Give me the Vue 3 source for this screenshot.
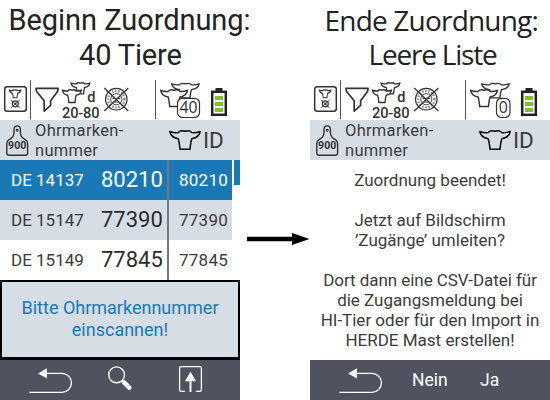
<script setup>
const rows = [
  { tag: 'DE 14137', big: '80210', id: '80210', active: true },
  { tag: 'DE 15147', big: '77390', id: '77390', shaded: true },
  { tag: 'DE 15149', big: '77845', id: '77845' },
]
const panels = [
  { key: 'start', count: '40', badgeX: 177.5, badgeW: 22 },
  { key: 'end', count: '0', badgeX: 186.5, badgeW: 13.5 },
]
const cow = 'M0.8 1.2C4 2.4 7 2.6 9.3 2.3C10.8 0.4 13.5 0.3 16 1.1C18.5 0.3 21.2 0.4 22.7 2.3C25 2.6 28 2.4 31.2 1.2C30.6 5.6 27.2 7.6 22.8 8.3C21.6 11.6 21.4 15 21 18.6H11C10.6 15 10.4 11.6 9.2 8.3C4.8 7.6 1.4 5.6 0.8 1.2Z'
</script>

<template>
  <main class="page">
    <section v-for="p in panels" :key="p.key" class="column" :class="p.key">
      <h1 v-if="p.key === 'start'" class="title"><span class="t1">Beginn Zuordnung:</span><span class="t2">40 Tiere</span></h1>
      <h1 v-else class="title alt"><span class="t3">Ende Zuordnung:</span><span class="t4">Leere Liste</span></h1>

      <div class="device">
        <div class="status">
          <svg width="30" height="40" viewBox="0 0 30 40" class="ink">
            <rect x="4.7" y="6.7" width="21.6" height="24.6" rx="2.5" stroke-width="1.5" />
            <g transform="translate(9 9.6) scale(.38 .44)"><path :d="cow" stroke-width="2.6" /></g>
            <circle cx="15.3" cy="23.8" r="3" stroke-width="1.2" />
            <circle cx="15.3" cy="23.8" r=".8" />
            <path d="M11 20l8.6 7.8M19.6 20L11 27.8" stroke-width=".9" />
          </svg>
          <i class="rule"></i>
          <svg width="29" height="40" viewBox="31 0 29 40" class="ink">
            <path d="M36 8.4H58.1Q58 11 57 12.3L50.6 20.8V25.4L44.2 31.2V20.8L37.2 12.3Q36 11 36 8.4Z" stroke-width="1.7" stroke-linejoin="round" />
          </svg>
          <svg width="42" height="40" viewBox="60 0 42 40" class="ink">
            <g transform="translate(70.5 2.4) scale(.62 .62)"><path :d="cow" stroke-width="2.1" /></g>
            <g transform="translate(62 9.4) scale(.62 .7)"><path :d="cow" stroke-width="2.1" fill="#fff" /></g>
            <text x="87.2" y="22.2" font-size="14.5" font-weight="500">d</text>
            <text x="62" y="37.6" font-size="14.6" font-weight="500" textLength="37.5">20-80</text>
          </svg>
          <svg width="29" height="40" viewBox="102 0 29 40" class="ink">
            <circle cx="116.3" cy="19.2" r="10.8" stroke-width="1.1" />
            <circle cx="116.3" cy="19.2" r="8.2" stroke-width="2.4" stroke-dasharray="1.5 1.6" opacity=".6" />
            <circle cx="116.3" cy="19.2" r="5.6" stroke-width=".9" />
            <path d="M112.5 18.5h2.5M117.7 18.5h2.5M114 22h4.6" stroke-width="1" />
            <path d="M104.3 8L128.3 31M128.3 8L104.3 31" stroke-width="1.3" />
          </svg>
          <i class="rule second"></i>
          <svg width="49" height="40" viewBox="156 0 49 40" class="ink">
            <g transform="translate(171 3) scale(.9 .8)"><path :d="cow" stroke-width="1.6" fill="#fbfbf8" /></g>
            <g transform="translate(160 9.3) scale(.88 .92)"><path :d="cow" stroke-width="1.6" fill="#fbfbf8" /></g>
            <rect :x="p.badgeX" y="18.3" :width="p.badgeW" height="19.2" rx="5" stroke-width="1.2" fill="#fff" />
            <text :x="p.badgeX + p.badgeW / 2" y="33.4" font-size="15.8" text-anchor="middle" class="count">{{ p.count }}</text>
          </svg>
          <svg width="35" height="40" viewBox="205 0 35 40">
            <rect x="215.5" y="8" width="7" height="3" fill="#222" />
            <rect x="212.2" y="11.8" width="13.6" height="23" fill="#fff" stroke="#222" stroke-width="2.5" />
            <path d="M215 16h8v4h-8zM215 22h8v4h-8zM215 28h8v4h-8z" fill="#82be32" />
          </svg>
        </div>

        <div class="head">
          <svg width="35" height="40" viewBox="0 0 35 40" class="ink">
            <path d="M9.3 35.3H25.2Q27.6 35.3 27.6 33V23.5Q27.6 20.8 25 19.4Q20.8 17.6 20.4 13V9.3Q20.2 5.9 17.2 5.9Q14.2 5.9 14 9.3V13Q13.6 17.6 9.4 19.4Q6.8 20.8 6.8 23.5V33Q6.8 35.3 9.3 35.3Z" stroke-width="1.4" />
            <circle cx="17.2" cy="10.2" r=".9" stroke-width="1.1" />
            <text x="17.2" y="29.4" font-size="10.6" font-weight="700" text-anchor="middle">900</text>
          </svg>
          <div class="label"><span>Ohrmarken-</span><span>nummer</span></div>
          <svg width="34" height="40" viewBox="168 0 34 40" class="cow-id">
            <g transform="translate(169 10.2) scale(1 1.02)"><path :d="cow" /></g>
          </svg>
          <span class="id">ID</span>
        </div>

        <template v-if="p.key === 'start'">
          <div class="list">
            <div class="rows">
              <div v-for="r in rows" :key="r.tag" class="row" :class="{ active: r.active, shaded: r.shaded }">
                <span class="tag">{{ r.tag }}</span>
                <span class="big">{{ r.big }}</span>
                <span class="small">{{ r.id }}</span>
              </div>
            </div>
            <div class="thumb"></div>
          </div>
          <div class="dialog"><span>Bitte Ohrmarkennummer</span><span>einscannen!</span></div>
        </template>

        <div v-else class="message">
          <p><span>Zuordnung beendet!</span></p>
          <p><span>Jetzt auf Bildschirm</span><span>’Zugänge’ umleiten?</span></p>
          <p><span class="tight">Dort dann eine CSV-Datei für</span><span>die Zugangsmeldung bei</span><span>HI-Tier oder für den Import in</span><span>HERDE Mast erstellen!</span></p>
        </div>

        <div class="foot">
          <svg width="80" height="40" viewBox="0 0 80 40">
            <path d="M29 32.3H62A9.45 9.45 0 0 0 62 13.4H46" fill="none" stroke="#fff" stroke-width="1.3" />
            <path d="M38 13.4L47 8.3V18.5Z" fill="#fff" />
          </svg>
          <template v-if="p.key === 'start'">
            <svg width="80" height="40" viewBox="80 0 80 40">
              <circle cx="116.6" cy="14.8" r="7.9" fill="none" stroke="#fff" stroke-width="1.4" />
              <path d="M121.8 20.4L125 23.5" stroke="#fff" stroke-width="2" />
              <path d="M124 22.4L129.3 27.7" stroke="#fff" stroke-width="4.6" stroke-linecap="round" />
            </svg>
            <svg width="80" height="40" viewBox="160 0 80 40">
              <path d="M185 31.3H181.2Q179.6 31.3 179.6 29.7V8.2Q179.6 6.6 181.2 6.6H199.8Q201.4 6.6 201.4 8.2V29.7Q201.4 31.3 199.8 31.3H196" fill="none" stroke="#fff" stroke-width="1.3" />
              <path d="M190.5 11.8L196 21.3H185Z" fill="#fff" />
              <path d="M190.5 20V32" stroke="#fff" stroke-width="2" />
            </svg>
          </template>
          <template v-else><span class="btn no">Nein</span><span class="btn yes">Ja</span></template>
        </div>
      </div>
    </section>

    <svg class="arrow" width="70" height="400" viewBox="240 0 70 400">
      <path d="M247 236.8H292V233L309.5 239L292 245V241.2H247Z" />
    </svg>
  </main>
</template>

<style>
body { margin: 0; background: #fff; }
</style>

<style scoped>
.page { width: 550px; height: 400px; display: grid; grid-template-columns: 240px 70px 240px; font-family: Roboto, "Liberation Sans", sans-serif; color: #3c3c3c; white-space: nowrap; overflow: hidden; }
.start { grid-column: 1; grid-row: 1; }
.arrow { grid-column: 2; grid-row: 1; fill: #000; }
.end { grid-column: 3; grid-row: 1; }
.column { width: 240px; }
svg { display: block; flex: none; }
.title { margin: 0; height: 80px; box-sizing: border-box; padding-top: 3px; font-size: 29px; font-weight: 400; line-height: 34.5px; color: #222; }
.title span { display: block; }
.t1 { padding-left: 8.5px; letter-spacing: -.05px; }
.t2 { padding-left: 79px; letter-spacing: -.15px; }
.alt { font-family: "Open Sans", sans-serif; font-size: 28px; padding-top: 2.5px; }
.t3 { padding-left: 14.5px; letter-spacing: -.8px; }
.t4 { padding-left: 58.5px; letter-spacing: -1.2px; }
.ink { fill: none; stroke: #333; }
.ink text { fill: #333; stroke: none; }
.ink .count { font-family: "Open Sans", sans-serif; }
.status { height: 40px; display: flex; }
.rule { width: 1px; height: 39px; background: #555; }
.second { margin-left: 24px; }
.head { height: 40px; display: flex; background: #d6dde5; }
.label { width: 133px; padding-top: 1px; font-size: 16.5px; line-height: 20px; letter-spacing: .28px; }
.label span { display: block; }
.cow-id path { fill: none; stroke: #000; stroke-width: 1.5; stroke-linejoin: round; }
.id { padding-left: 1px; font-size: 22.5px; line-height: 40px; }
.list { display: flex; height: 120px; gap: 2px; }
.rows { width: 232px; }
.row { height: 40px; display: grid; grid-template-columns: 101px 66px 65px; line-height: 40px; font-size: 17px; }
.row.shaded { background: #d6dde5; }
.row.active { background: #1b78b7; color: #fff; }
.tag { padding-left: 11px; }
.big { font-size: 22px; }
.row:not(.active) .big { color: #2c2c2c; }
.small { border-left: 2px solid #75787c; padding-left: 10px; letter-spacing: .25px; }
.thumb { width: 6px; height: 25px; background: #1b78b7; }
.dialog { height: 80px; box-sizing: border-box; border: 2px solid #000; border-bottom-width: 3px; background: #d6dde5; color: #1b78b7; font-size: 18px; line-height: 22px; padding-top: 15px; text-align: center; }
.dialog span { display: block; }
.message { height: 200px; box-sizing: border-box; padding-top: 10px; font-size: 17px; line-height: 20px; text-align: center; }
.message p { margin: 0 0 20px; }
.message span { display: block; }
.message .tight { letter-spacing: -.05px; }
.foot { height: 40px; display: flex; background: #50535f; color: #fff; }
.btn { font-size: 17.5px; line-height: 41px; }
.no { padding-left: 22px; width: 68px; }
</style>
